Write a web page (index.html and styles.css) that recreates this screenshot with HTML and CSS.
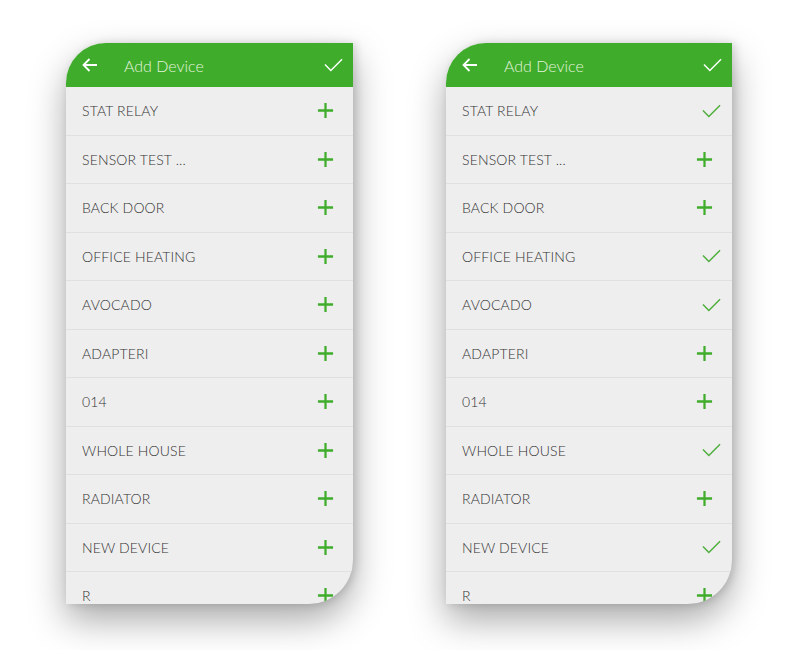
FILE: index.html
```html
<!DOCTYPE html>
<html lang="en">
<head>
  <meta charset="UTF-8">
  <title>Add Device</title>
  <link rel="stylesheet" href="styles.css">
</head>
<body>
  <svg class="defs" width="0" height="0">
    <symbol id="plus" viewBox="0 0 18 18"><path d="M9 1v16M1 9h16" fill="none" stroke="currentColor" stroke-width="2.4"/></symbol>
    <symbol id="tick" viewBox="0 0 20 14"><path d="M1 6.5l6.2 6.2L19 1" fill="none" stroke="currentColor" stroke-width="1.5"/></symbol>
    <symbol id="back" viewBox="0 0 15 14"><path d="M15 7H1.5M7.5 1L1.5 7l6 6" fill="none" stroke="currentColor" stroke-width="1.8"/></symbol>
  </svg>

  <div class="screens">
    <div class="phone">
      <div class="bar">
        <svg class="back"><use href="#back"/></svg>
        <span class="title">Add Device</span>
        <svg class="done"><use href="#tick"/></svg>
      </div>
      <ul class="list">
        <li><span>STAT RELAY</span><svg class="add"><use href="#plus"/></svg></li>
        <li><span>SENSOR TEST ...</span><svg class="add"><use href="#plus"/></svg></li>
        <li><span>BACK DOOR</span><svg class="add"><use href="#plus"/></svg></li>
        <li><span>OFFICE HEATING</span><svg class="add"><use href="#plus"/></svg></li>
        <li><span>AVOCADO</span><svg class="add"><use href="#plus"/></svg></li>
        <li><span>ADAPTERI</span><svg class="add"><use href="#plus"/></svg></li>
        <li><span>014</span><svg class="add"><use href="#plus"/></svg></li>
        <li><span>WHOLE HOUSE</span><svg class="add"><use href="#plus"/></svg></li>
        <li><span>RADIATOR</span><svg class="add"><use href="#plus"/></svg></li>
        <li><span>NEW DEVICE</span><svg class="add"><use href="#plus"/></svg></li>
        <li><span>R</span><svg class="add"><use href="#plus"/></svg></li>
      </ul>
    </div>

    <div class="phone">
      <div class="bar">
        <svg class="back"><use href="#back"/></svg>
        <span class="title">Add Device</span>
        <svg class="done"><use href="#tick"/></svg>
      </div>
      <ul class="list">
        <li><span>STAT RELAY</span><svg class="added"><use href="#tick"/></svg></li>
        <li><span>SENSOR TEST ...</span><svg class="add"><use href="#plus"/></svg></li>
        <li><span>BACK DOOR</span><svg class="add"><use href="#plus"/></svg></li>
        <li><span>OFFICE HEATING</span><svg class="added"><use href="#tick"/></svg></li>
        <li><span>AVOCADO</span><svg class="added"><use href="#tick"/></svg></li>
        <li><span>ADAPTERI</span><svg class="add"><use href="#plus"/></svg></li>
        <li><span>014</span><svg class="add"><use href="#plus"/></svg></li>
        <li><span>WHOLE HOUSE</span><svg class="added"><use href="#tick"/></svg></li>
        <li><span>RADIATOR</span><svg class="add"><use href="#plus"/></svg></li>
        <li><span>NEW DEVICE</span><svg class="added"><use href="#tick"/></svg></li>
        <li><span>R</span><svg class="add"><use href="#plus"/></svg></li>
      </ul>
    </div>
  </div>
</body>
</html>
```

FILE: styles.css
```css
body {
  margin: 0;
  background: #fff;
  font-family: Lato, "Open Sans", sans-serif;
}
.defs {
  position: absolute;
}
.screens {
  display: flex;
  align-items: flex-start;
  gap: 93px;
  padding: 43px 0 46px 66px;
}
.phone {
  width: 287px;
  height: 561px;
  background: #eeeeee;
  border-radius: 40px 0 44px 0;
  overflow: hidden;
  box-shadow: 0 16px 36px rgba(0, 0, 0, 0.34), 3px 0 8px rgba(0, 0, 0, 0.14);
}
.phone + .phone {
  width: 286px;
}
.bar {
  height: 44px;
  background: #3fad2b;
  display: flex;
  align-items: center;
  padding: 0 10px 0 16px;
  color: #fff;
}
.back {
  width: 15px;
  height: 14px;
}
.title {
  margin-left: 27px;
  font-size: 16px;
  font-weight: 300;
  color: #e4f3df;
  flex: 1;
}
.done {
  width: 19px;
  height: 14px;
}
.list {
  list-style: none;
  margin: 0;
  padding: 0;
}
.list li {
  box-sizing: border-box;
  height: 48.5px;
  border-bottom: 1px solid #e0e0e0;
  display: flex;
  align-items: center;
  justify-content: space-between;
  padding: 0 19px 0 16px;
  font-size: 14px;
  font-weight: 300;
  color: #333;
  letter-spacing: 0.15px;
}
.add {
  width: 17px;
  height: 17px;
  color: #3fad2b;
  margin-right: 0;
}
.added {
  width: 19px;
  height: 14px;
  color: #4cae3a;
  margin-right: -8px;
}
```
